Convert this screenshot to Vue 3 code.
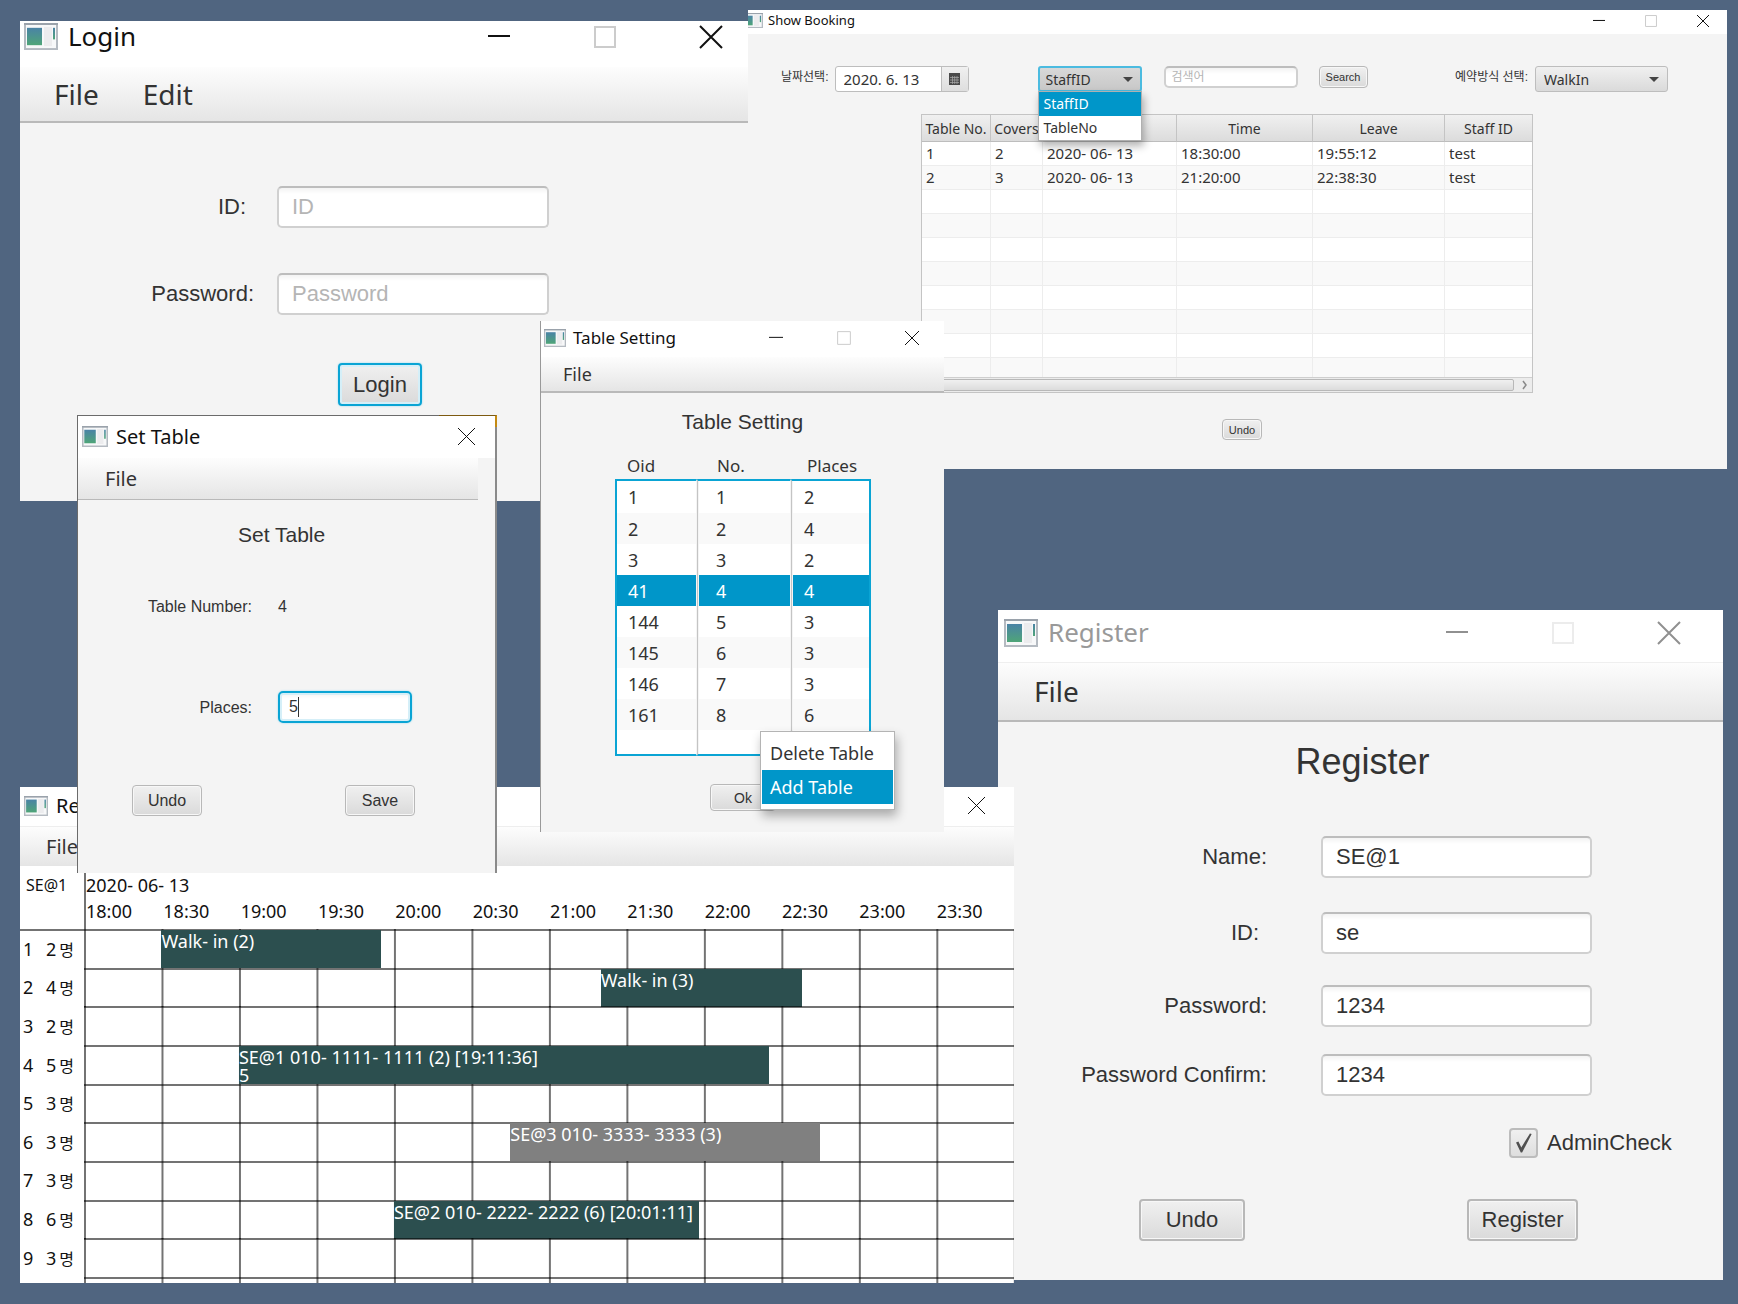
<script setup>
import { ref, h } from 'vue'

const AppIcon = () =>
  h('svg', { class: 'app-icon', viewBox: '0 0 34 28', preserveAspectRatio: 'none', 'aria-hidden': 'true' }, [
    h('defs', [
      h('linearGradient', { id: 'pane', x1: 0, y1: 0, x2: 0, y2: 1 }, [
        h('stop', { offset: 0, 'stop-color': '#4a83a6' }),
        h('stop', { offset: 1, 'stop-color': '#4fa578' })
      ])
    ]),
    h('rect', { x: 1, y: 1, width: 32, height: 26, fill: '#f7f8f9', stroke: '#b4bac1', 'stroke-width': 2 }),
    h('path', { d: 'M0 1h34', stroke: '#9aa2ab', 'stroke-width': 2 }),
    h('rect', { x: 3, y: 5, width: 15, height: 18, fill: 'url(#pane)' }),
    h('rect', { x: 20, y: 4, width: 8, height: 20, fill: '#ececee' }),
    h('rect', { x: 29, y: 5, width: 2, height: 12, fill: 'url(#pane)' })
  ])

const shapes = {
  Minimize: 'M0 10h22',
  Maximize: 'M1 1h20v20h-20z',
  Close: 'M0 0l22 22M22 0l-22 22'
}
const WindowControls = (props) =>
  h('div', { class: 'controls' }, props.names.map((name) =>
    h('button', { type: 'button', class: ['control', name.toLowerCase()], 'aria-label': name }, [
      h('svg', { viewBox: '0 0 22 22', 'aria-hidden': 'true' }, [
        h('path', { d: shapes[name], fill: 'none', 'stroke-width': 2, 'vector-effect': 'non-scaling-stroke' })
      ])
    ])
  ))
WindowControls.props = ['names']

const allControls = ['Minimize', 'Maximize', 'Close']

const searchBy = ref('StaffID')
const bookingType = ref('WalkIn')
const bookings = [
  ['1', '2', '2020- 06- 13', '18:30:00', '19:55:12', 'test'],
  ['2', '3', '2020- 06- 13', '21:20:00', '22:38:30', 'test'],
  ...Array.from({ length: 8 }, () => ['', '', '', '', '', ''])
]

const tables = [
  [1, 1, 2], [2, 2, 4], [3, 3, 2], [41, 4, 4], [144, 5, 3],
  [145, 6, 3], [146, 7, 3], [161, 8, 6], ['', '', '']
]

const times = ['18:00', '18:30', '19:00', '19:30', '20:00', '20:30', '21:00', '21:30', '22:00', '22:30', '23:00', '23:30']
// start and end are minutes after 18:00
const schedule = [
  { seats: 2, bar: { start: 30, end: 115, text: 'Walk- in (2)' } },
  { seats: 4, bar: { start: 200, end: 278, text: 'Walk- in (3)' } },
  { seats: 2 },
  { seats: 5, bar: { start: 60, end: 265, text: 'SE@1 010- 1111- 1111 (2) [19:11:36]\n5' } },
  { seats: 3 },
  { seats: 3, bar: { start: 165, end: 285, text: 'SE@3 010- 3333- 3333 (3)', pending: true } },
  { seats: 3 },
  { seats: 6, bar: { start: 120, end: 238, text: 'SE@2 010- 2222- 2222 (6) [20:01:11]' } },
  { seats: 3 }
]
const span = 360
const barStyle = (bar) => ({
  marginLeft: (bar.start / span) * 100 + '%',
  width: ((bar.end - bar.start) / span) * 100 + '%'
})

const places = ref('5')
const admin = ref(true)
</script>

<template>
  <main class="desktop">
    <section class="window login" aria-label="Login">
      <header class="titlebar">
        <AppIcon /><span class="title">Login</span>
        <WindowControls :names="allControls" />
      </header>
      <nav class="menubar"><button type="button">File</button><button type="button">Edit</button></nav>
      <form class="form" @submit.prevent>
        <div class="fields">
          <label class="short" for="login-id">ID:</label>
          <input id="login-id" class="field" type="text" placeholder="ID" />
          <label for="login-pw">Password:</label>
          <input id="login-pw" class="field" type="password" placeholder="Password" />
        </div>
        <button class="btn focused" type="submit">Login</button>
      </form>
    </section>

    <section class="window booking" aria-label="Show Booking">
      <header class="titlebar">
        <AppIcon /><span class="title">Show Booking</span>
        <WindowControls :names="allControls" />
      </header>
      <div class="toolbar">
        <label for="date">날짜선택:</label>
        <div class="date">
          <input id="date" type="text" value="2020. 6. 13" />
          <button type="button" aria-label="Open calendar">
            <svg viewBox="0 0 11 12" width="11" height="12" aria-hidden="true">
              <rect width="11" height="12" fill="#4a4a4a" />
              <path d="M1 4.5h9M1 7h9M1 9.5h9M3.5 3v8M5.700 3v8M8 3v8" stroke="#aaa" stroke-width=".7" />
            </svg>
          </button>
        </div>
        <div class="combo by">
          <select v-model="searchBy" aria-label="Search by">
            <option>StaffID</option>
            <option>TableNo</option>
          </select>
          <ul class="popup">
            <li class="active">StaffID</li>
            <li>TableNo</li>
          </ul>
        </div>
        <input class="field search" type="text" placeholder="검색어" aria-label="검색어" />
        <button class="btn" type="button">Search</button>
        <label class="type-label" for="type">예약방식 선택:</label>
        <div class="combo type">
          <select id="type" v-model="bookingType"><option>WalkIn</option></select>
        </div>
      </div>
      <div class="grid-view">
        <table>
          <colgroup><col class="c1" /><col class="c2" /><col class="c3" /><col class="c4" /><col class="c5" /><col /></colgroup>
          <thead>
            <tr><th>Table No.</th><th>Covers</th><th></th><th>Time</th><th>Leave</th><th>Staff ID</th></tr>
          </thead>
          <tbody>
            <tr v-for="(row, i) in bookings" :key="i"><td v-for="(cell, j) in row" :key="j">{{ cell }}</td></tr>
          </tbody>
        </table>
        <div class="scrollbar">
          <div class="thumb"></div>
          <svg viewBox="0 0 6 10" width="6" height="10" aria-hidden="true"><path d="M1 1l3 4-3 4" fill="none" stroke="#888" stroke-width="1.500" /></svg>
        </div>
      </div>
      <button class="btn undo" type="button">Undo</button>
    </section>

    <section class="window register" aria-label="Register">
      <header class="titlebar">
        <AppIcon /><span class="title">Register</span>
        <WindowControls :names="allControls" />
      </header>
      <nav class="menubar"><button type="button">File</button></nav>
      <form class="form" @submit.prevent>
        <h2>Register</h2>
        <div class="fields">
          <label for="reg-name">Name:</label>
          <input id="reg-name" class="field" type="text" value="SE@1" />
          <label class="short" for="reg-id">ID:</label>
          <input id="reg-id" class="field" type="text" value="se" />
          <label for="reg-pw">Password:</label>
          <input id="reg-pw" class="field" type="text" value="1234" />
          <label for="reg-pw2">Password Confirm:</label>
          <input id="reg-pw2" class="field" type="text" value="1234" />
        </div>
        <label class="check"><input v-model="admin" type="checkbox" />AdminCheck</label>
        <div class="actions">
          <button class="btn" type="button">Undo</button>
          <button class="btn" type="submit">Register</button>
        </div>
      </form>
    </section>

    <section class="window schedule" aria-label="Reservations">
      <header class="titlebar">
        <AppIcon /><span class="title">Re</span>
        <WindowControls :names="['Close']" />
      </header>
      <nav class="menubar"><button type="button">File</button></nav>
      <div class="timeline">
        <div class="head">
          <div class="staff">SE@1</div>
          <div class="scale">
            <div>2020- 06- 13</div>
            <div class="times"><span v-for="t in times" :key="t">{{ t }}</span></div>
          </div>
        </div>
        <div class="rows">
          <div v-for="(row, i) in schedule" :key="i" class="row">
            <div class="seat"><span class="no">{{ i + 1 }}</span><span>{{ row.seats }}</span><span class="unit">명</span></div>
            <div class="track">
              <div v-if="row.bar" class="bar" :class="{ pending: row.bar.pending }" :style="barStyle(row.bar)">{{ row.bar.text }}</div>
            </div>
          </div>
        </div>
        <div class="row tail"><div class="seat"></div><div class="track"></div></div>
      </div>
    </section>

    <section class="window settings" aria-label="Table Setting">
      <header class="titlebar">
        <AppIcon /><span class="title">Table Setting</span>
        <WindowControls :names="allControls" />
      </header>
      <nav class="menubar"><button type="button">File</button></nav>
      <h2>Table Setting</h2>
      <table class="list">
        <colgroup><col class="c1" /><col class="c2" /><col class="c3" /></colgroup>
        <thead><tr><th>Oid</th><th>No.</th><th>Places</th></tr></thead>
        <tbody>
          <tr v-for="(row, i) in tables" :key="i" :class="{ selected: row[0] === 41 }">
            <td v-for="(cell, j) in row" :key="j">{{ cell }}</td>
          </tr>
        </tbody>
      </table>
      <button class="btn ok" type="button">Ok</button>
      <div class="context" role="menu">
        <button type="button" role="menuitem">Delete Table</button>
        <button type="button" role="menuitem" class="active">Add Table</button>
      </div>
    </section>

    <section class="window set-table" aria-label="Set Table">
      <header class="titlebar">
        <AppIcon /><span class="title">Set Table</span>
        <WindowControls :names="['Close']" />
      </header>
      <nav class="menubar"><button type="button">File</button></nav>
      <form class="form" @submit.prevent>
        <h2>Set Table</h2>
        <div class="fields">
          <span class="name">Table Number:</span>
          <output>4</output>
          <label for="places">Places:</label>
          <div class="entry">
            <input id="places" v-model="places" class="field focused" type="text" />
            <span class="caret"></span>
          </div>
        </div>
        <div class="actions">
          <button class="btn" type="button">Undo</button>
          <button class="btn" type="submit">Save</button>
        </div>
      </form>
    </section>
  </main>
</template>

<style>
body {
  margin: 0;
  background: #506580;
}

.window * {
  box-sizing: border-box;
}

.app-icon {
  flex: none;
  width: var(--icon-w);
  height: var(--icon-h);
}

.controls {
  display: flex;
  gap: var(--control-gap);
  margin-left: auto;
}

.control {
  width: var(--glyph);
  height: var(--glyph);
  padding: 0;
  border: 0;
  background: none;
  color: var(--ink, #111);
}

.control svg {
  display: block;
  width: 100%;
  height: 100%;
  overflow: visible;
  stroke: currentColor;
}

.control path {
  stroke-width: var(--stroke, 1px);
}

.control.maximize {
  color: var(--faint, #ccc);
}
</style>

<style scoped>
.desktop {
  --ui: "Noto Sans", "Noto Sans CJK KR", sans-serif;
  --form: "Liberation Sans", "Noto Sans CJK KR", sans-serif;
  position: relative;
  min-height: 100vh;
  background: #506580;
  color: #333;
  font-family: var(--form);
}

.window {
  position: absolute;
  box-sizing: border-box;
  background: #f4f4f4;
}

.titlebar {
  display: flex;
  align-items: center;
  background: #fff;
  color: #111;
  font-family: var(--ui);
  white-space: nowrap;
}

.menubar {
  display: flex;
  background: linear-gradient(#fdfdfd, #e5e5e5);
  border-bottom: 2px solid #b9b9b9;
  font-family: var(--ui);
}

.menubar button {
  padding: 0;
  border: 0;
  background: none;
  color: #333;
  font: inherit;
}

h2 {
  margin: 0;
  font-weight: 400;
}

.fields {
  display: grid;
  align-items: start;
}

.fields label,
.fields .name {
  text-align: right;
}

.field {
  width: 100%;
  margin: 0;
  border: 2px solid #d0d0d0;
  border-top-color: #bdbdbd;
  border-radius: 5px;
  background: linear-gradient(#f3f3f3, #fff 6px);
  color: #333;
  font-family: var(--form);
  outline: 0;
}

.field::placeholder {
  color: #b5b5b5;
  opacity: 1;
}

.btn {
  padding: 0;
  border: 1px solid #b8b8b8;
  border-radius: 4px;
  background: linear-gradient(#f0f0f0, #dadada);
  box-shadow: inset 0 0 0 1px #f7f7f7;
  color: #333;
  font-family: var(--form);
}

.btn.focused,
.field.focused {
  border: 2px solid #0aa4d4;
  box-shadow: 0 0 2px #8fd6ee, inset 0 0 0 2px #d5eff8;
}

.actions {
  display: flex;
}

/* Login */
.login {
  --icon-w: 34px;
  --icon-h: 27px;
  --glyph: 22px;
  --control-gap: 84px;
  --stroke: 2px;
  left: 20px;
  top: 21px;
  width: 728px;
  padding-bottom: 95px;
  font-size: 22px;
}

.login .titlebar {
  gap: 10px;
  padding: 0 26px 15px 4px;
  font-size: 26px;
  line-height: 31px;
}

.login .menubar {
  gap: 44px;
  padding-left: 34px;
  font-size: 28px;
  line-height: 54px;
}

.login .fields {
  grid-template: 87px 42px / 234px 272px;
  column-gap: 23px;
  padding-top: 63px;
  line-height: 42px;
}

.login .short {
  padding-right: 8px;
}

.login .field,
.register .field {
  height: 42px;
  padding: 0 13px;
  font-size: 22px;
}

.login .btn,
.register .btn {
  border-width: 2px;
}

.login .btn {
  display: block;
  width: 84px;
  height: 43px;
  margin: 48px 0 0 318px;
  font-size: 22px;
}

/* Show Booking */
.booking {
  --icon-w: 22px;
  --icon-h: 15px;
  --glyph: 12px;
  --control-gap: 40px;
  left: 748px;
  right: 11px;
  top: 10px;
  padding-bottom: 29px;
  overflow: hidden;
}

.booking .titlebar {
  gap: 5px;
  margin-left: -7px;
  padding: 0 18px 3px 0;
  font-size: 13px;
  line-height: 21px;
}

.toolbar {
  display: flex;
  align-items: flex-start;
  padding: 32px 59px 0 33px;
  font-size: 12px;
  line-height: 23px;
  white-space: nowrap;
}

.date {
  display: flex;
  flex: none;
  width: 134px;
  height: 26px;
  margin-left: 6px;
  border: 1px solid #bdbdbd;
  border-radius: 3px;
  background: #fff;
}

.date input {
  flex: 1;
  min-width: 0;
  padding: 0 0 0 8px;
  border: 0;
  background: none;
  color: #333;
  font: 15px var(--ui);
}

.date button {
  display: grid;
  place-items: center;
  width: 27px;
  padding: 0;
  border: 0;
  border-left: 1px solid #bdbdbd;
  background: linear-gradient(#f0f0f0, #dedede);
}

.combo {
  position: relative;
  flex: none;
  height: 26px;
}

.combo::after {
  content: "";
  position: absolute;
  right: 9px;
  top: 11px;
  border: 5px solid transparent;
  border-top-color: #444;
  border-bottom: 0;
}

.combo select {
  appearance: none;
  width: 100%;
  height: 100%;
  margin: 0;
  padding: 0 8px;
  border: 1px solid #bdbdbd;
  border-radius: 3px;
  background: linear-gradient(#f0f0f0, #dadada);
  color: #333;
  font: 14px var(--ui);
  outline: 0;
}

.combo.by {
  width: 104px;
  margin-left: 69px;
}

.combo.by select {
  border: 2px solid #4bbbe0;
  padding: 0 6px;
  background: linear-gradient(#d8d8d8, #c8c8c8);
}

.combo.type {
  width: 133px;
  margin-left: 7px;
}

.popup {
  position: absolute;
  z-index: 1;
  left: 0;
  right: 0;
  top: 25px;
  margin: 0;
  padding: 0;
  border: 1px solid #b0b0b0;
  background: #fff;
  box-shadow: 2px 5px 8px rgba(0, 0, 0, 0.3);
  font-family: var(--ui);
  font-size: 14px;
  line-height: 24px;
  list-style: none;
}

.popup li {
  padding-left: 5px;
}

.popup .active {
  background: #0096c9;
  color: #fff;
}

.booking .search {
  flex: none;
  width: 134px;
  height: 22px;
  margin: 0 21px 0 22px;
  padding: 0 6px;
  font-size: 12px;
}

.toolbar .btn {
  flex: none;
  width: 49px;
  height: 22px;
  font-size: 11px;
}

.type-label {
  margin-left: auto;
}

.grid-view {
  margin: 22px 194px 0 173px;
  border: 1px solid #c4c4c4;
  font-family: var(--ui);
}

.grid-view table {
  width: 100%;
  table-layout: fixed;
  border-collapse: separate;
  border-spacing: 0;
}

.grid-view .c1 { width: 69px; }
.grid-view .c2 { width: 52px; }
.grid-view .c3 { width: 134px; }
.grid-view .c4 { width: 136px; }
.grid-view .c5 { width: 132px; }

.grid-view th {
  height: 27px;
  padding: 1px 0 0;
  border-right: 1px solid #c4c4c4;
  border-bottom: 1px solid #bdbdbd;
  background: linear-gradient(#f0f0f0, #dcdcdc);
  font-size: 14px;
  font-weight: 400;
  line-height: 20px;
  white-space: nowrap;
}

.grid-view th:last-child,
.grid-view td:last-child {
  border-right: 0;
}

.grid-view td {
  height: 24px;
  padding: 0 4px 2px;
  border-right: 1px solid #ededed;
  border-bottom: 1px solid #ededed;
  background: #fff;
  font-size: 15px;
  line-height: 20px;
  white-space: nowrap;
}

.grid-view tr:nth-child(even) td {
  background: #f9f9f9;
}

.grid-view tbody tr:last-child td {
  height: 19px;
  border-bottom: 0;
  line-height: 16px;
}

.scrollbar {
  display: flex;
  align-items: center;
  gap: 8px;
  height: 15px;
  padding: 1px 4px 1px 0;
  border-top: 1px solid #cfcfcf;
  background: #ececec;
}

.thumb {
  flex: 1;
  height: 12px;
  border: 1px solid #b8b8b8;
  border-radius: 2px;
  background: linear-gradient(#f0f0f0, #dcdcdc);
}

.booking .undo {
  display: block;
  width: 40px;
  height: 21px;
  margin: 26px 0 0 474px;
  font-size: 11px;
}

/* Register */
.register {
  --icon-w: 34px;
  --icon-h: 28px;
  --glyph: 22px;
  --control-gap: 84px;
  --stroke: 2px;
  --ink: #909090;
  --faint: #ececec;
  left: 998px;
  right: 15px;
  top: 610px;
  padding-bottom: 39px;
  font-size: 22px;
}

.register .titlebar {
  gap: 10px;
  padding: 0 43px 7px 6px;
  border-bottom: 1px solid #efefef;
  color: #999;
  font-size: 26px;
  line-height: 45px;
}

.register .menubar {
  padding-left: 36px;
  font-size: 28px;
  line-height: 57px;
}

.register h2 {
  margin-top: 20px;
  padding-left: 4px;
  font-size: 36px;
  line-height: 40px;
  text-align: center;
}

.register .fields {
  grid-template: 76px 73px 69px 42px / 269px 271px;
  column-gap: 54px;
  padding-top: 54px;
  line-height: 42px;
}

.register .short {
  padding-right: 8px;
}

.check {
  display: flex;
  align-items: center;
  gap: 9px;
  margin: 32px 0 0 511px;
  line-height: 30px;
}

.check input {
  appearance: none;
  width: 29px;
  height: 30px;
  margin: 0;
  padding: 3px 4px;
  border: 2px solid #bcbcbc;
  border-radius: 4px;
  background: linear-gradient(#f0f0f0, #dedede);
}

.check input:checked::before {
  content: "";
  display: block;
  width: 100%;
  height: 100%;
  background: #505050;
  clip-path: polygon(6% 48%, 20% 42%, 37% 72%, 88% 2%, 98% 5%, 42% 98%, 34% 98%);
}

.register .actions {
  gap: 222px;
  margin: 41px 0 0 141px;
}

.register .btn {
  width: 106px;
  height: 42px;
  font-size: 22px;
}

.register .btn + .btn {
  width: 111px;
}

/* Schedule */
.schedule {
  --icon-w: 24px;
  --icon-h: 20px;
  --glyph: 17px;
  --control-gap: 0px;
  left: 20px;
  top: 787px;
  width: 994px;
  background: #fff;
  color: #111;
  font-family: var(--ui);
  font-size: 18px;
}

.schedule .titlebar {
  gap: 8px;
  padding: 0 29px 2px 4px;
  border-bottom: 1px solid #eee;
  font-size: 20px;
  line-height: 37px;
}

.schedule .menubar {
  padding-left: 26px;
  border: 0;
  font-size: 20px;
  line-height: 39px;
}

.head {
  display: grid;
  grid-template-columns: 64px 1fr;
  line-height: 26px;
}

.staff {
  padding: 6px 0 0 6px;
  font-size: 16px;
}

.scale {
  padding: 6px 0 5px;
  border-left: 2px solid rgba(0, 0, 0, 0.55);
}

.times {
  display: grid;
  grid-template-columns: repeat(12, 1fr);
}

.rows {
  display: grid;
  grid-template-rows: repeat(9, 1fr);
  height: 348px;
  background: linear-gradient(#737373, #737373) 0 0 / 64px 2px no-repeat;
}

.row {
  display: grid;
  grid-template-columns: 64px 1fr;
  min-height: 0;
}

.seat {
  display: flex;
  align-items: center;
  padding-left: 3px;
}

.no {
  width: 23px;
}

.unit {
  margin-left: 3px;
  font-size: 16px;
}

.track {
  min-width: 0;
  padding-top: 1px;
  background:
    linear-gradient(rgba(0, 0, 0, 0.55), rgba(0, 0, 0, 0.55)) 0 0 / 100% 2px no-repeat,
    linear-gradient(90deg, rgba(0, 0, 0, 0.55) 2px, transparent 2px) 0 0 / calc(100% / 12) 100%;
}

.bar {
  height: 38px;
  padding-top: 2px;
  background: #2c4f4f;
  color: #fff;
  line-height: 18px;
  white-space: pre;
}

.bar.pending {
  background: #808080;
}

.tail {
  height: 6px;
}

/* Table Setting */
.settings {
  --icon-w: 22px;
  --icon-h: 18px;
  --glyph: 14px;
  --control-gap: 54px;
  left: 540px;
  top: 321px;
  width: 404px;
  padding-bottom: 21px;
  border-left: 1px solid #999;
}

.settings .titlebar {
  gap: 7px;
  padding: 0 25px 3px 3px;
  font-size: 17px;
  line-height: 33px;
}

.settings .menubar {
  padding-left: 22px;
  font-size: 18px;
  line-height: 34px;
}

.settings h2 {
  margin-top: 16px;
  font-size: 21px;
  line-height: 26px;
  text-align: center;
}

.list {
  width: 256px;
  margin: 18px 0 0 74px;
  table-layout: fixed;
  border-collapse: separate;
  border-spacing: 0;
  font-family: var(--ui);
  font-size: 18px;
  line-height: 24px;
}

.list .c1 { width: 82px; }
.list .c2 { width: 94px; }
.list .c3 { width: 80px; }

.list th {
  height: 26px;
  padding: 0 0 0 12px;
  font-size: 17px;
  font-weight: 400;
  text-align: left;
}

.list th + th {
  padding-left: 20px;
}

.list th:last-child {
  padding-left: 16px;
}

.list td {
  height: 31px;
  padding: 0 0 0 11px;
  border: 0 solid #0aa4d4;
  background: #fff;
}

.list tr:nth-child(even) td {
  background: #f9f9f9;
}

.list tr.selected td {
  background: #0096c9;
  color: #fff;
}

.list td:not(:last-child) {
  border-right: 1px solid #f4f4f4;
}

.list td + td {
  padding-left: 18px;
  border-left: 1px solid #c4c4c4;
  box-shadow: inset 1px 0 #f4f4f4;
}

.list td:first-child {
  border-left-width: 2px;
  border-left-color: #0aa4d4;
}

.list td:last-child {
  padding-left: 12px;
  border-right-width: 2px;
}

.list tbody tr:first-child td {
  height: 34px;
  border-top: 2px solid #0aa4d4;
}

.list tbody tr:last-child td {
  height: 26px;
  border-bottom: 2px solid #0aa4d4;
}

.ok {
  display: block;
  width: 66px;
  height: 27px;
  margin: 28px 0 0 169px;
  font-size: 14px;
}

.context {
  position: absolute;
  left: 219px;
  top: 410px;
  width: 135px;
  padding: 4px 1px 5px;
  border: 1px solid #b4b4b4;
  background: #fff;
  box-shadow: 2px 6px 10px rgba(0, 0, 0, 0.3);
}

.context button {
  display: block;
  width: 100%;
  padding: 0 0 0 8px;
  border: 0;
  background: none;
  color: #333;
  font: 18px/34px var(--ui);
  text-align: left;
  white-space: nowrap;
}

.context .active {
  background: #0096c9;
  color: #fff;
}

/* Set Table */
.set-table {
  --icon-w: 26px;
  --icon-h: 21px;
  --glyph: 17px;
  --control-gap: 0px;
  left: 77px;
  top: 415px;
  width: 420px;
  padding-bottom: 57px;
  border: 1px solid #6b6b6b;
  border-right: 2px solid #8a8a8a;
  border-bottom: 0;
  font-size: 16px;
}

.set-table::before {
  content: "";
  position: absolute;
  top: -1px;
  right: -2px;
  width: 56px;
  height: 11px;
  border-top: 1px solid #7d5a10;
  border-right: 2px solid #c48a12;
}

.set-table .titlebar {
  gap: 8px;
  padding: 0 20px 1px 4px;
  font-size: 20px;
  line-height: 41px;
}

.set-table .menubar {
  margin-right: 17px;
  padding-left: 27px;
  border-bottom-width: 1px;
  font-size: 20px;
  line-height: 41px;
}

.set-table h2 {
  margin: 22px 0 0 160px;
  font-size: 21px;
  line-height: 26px;
}

.set-table .fields {
  grid-template: 101px 32px / 174px 134px;
  column-gap: 26px;
  padding-top: 42px;
  line-height: 34px;
}

.entry {
  position: relative;
}

.entry .field {
  display: block;
  height: 32px;
  padding: 0 9px;
  font-size: 16px;
}

.caret {
  position: absolute;
  left: 20px;
  top: 6px;
  width: 1px;
  height: 20px;
  background: #333;
}

.set-table .actions {
  gap: 143px;
  margin: 62px 0 0 54px;
}

.set-table .btn {
  width: 70px;
  height: 31px;
  font-size: 16px;
}
</style>
